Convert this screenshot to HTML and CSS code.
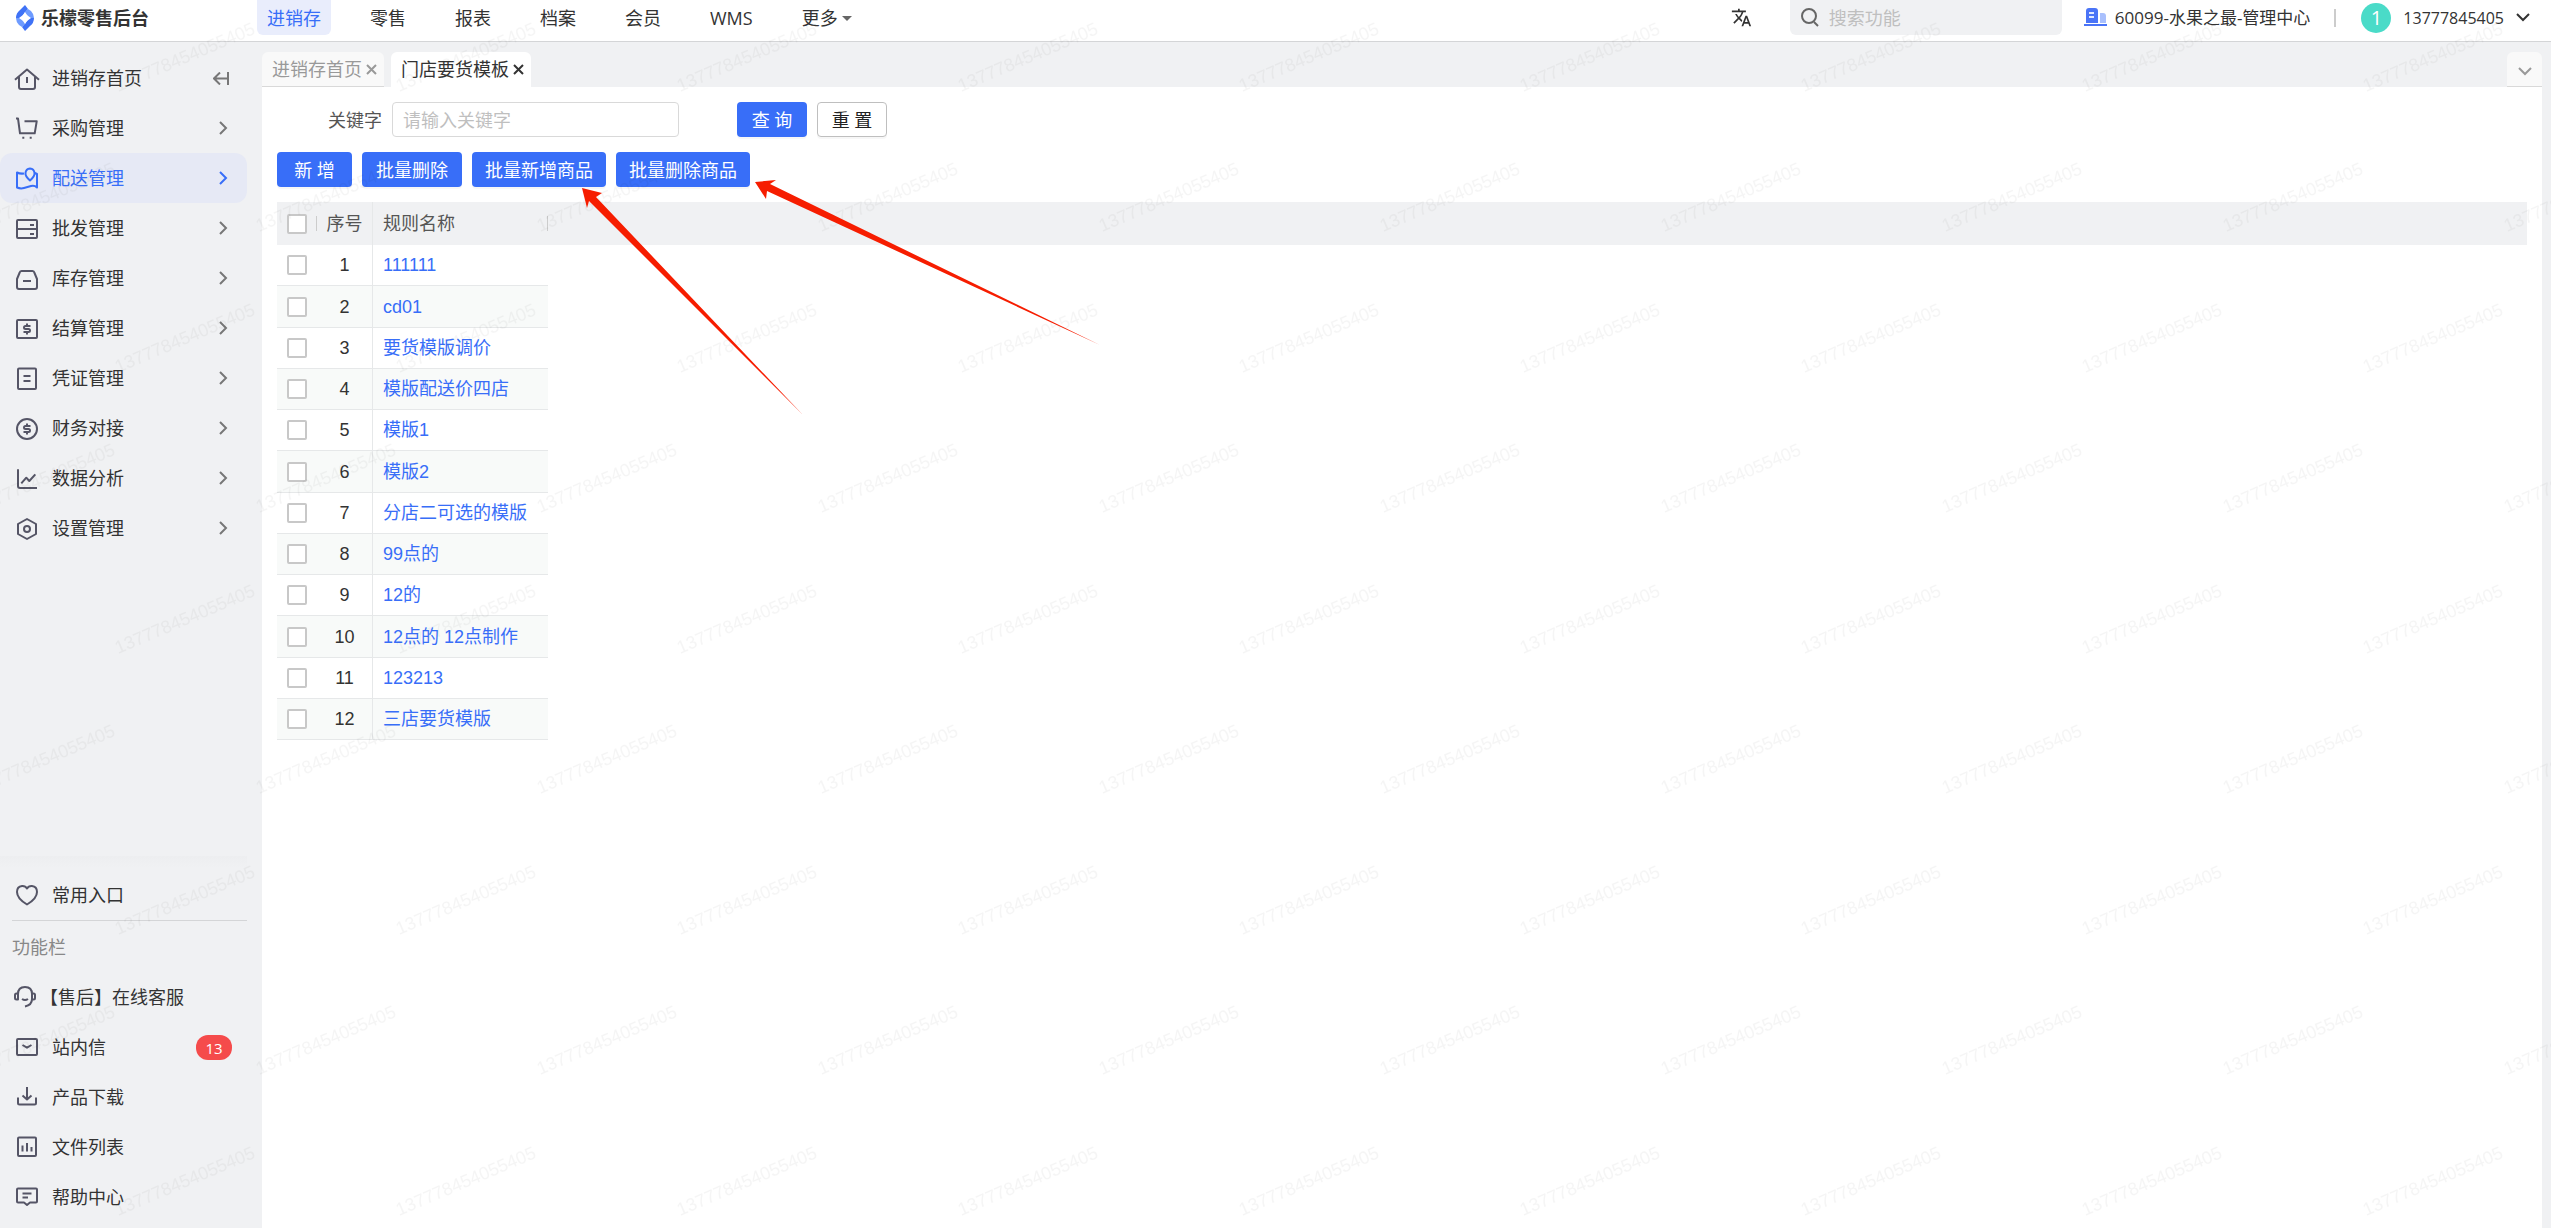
FILE: index.html
```html
<!DOCTYPE html>
<html lang="zh-CN">
<head>
    <meta charset="UTF-8">
    <title>门店要货模板</title>
    <link rel="stylesheet" href="styles.css">
</head>
<body>

<!--顶部导航-->
<header class="header">
    <a class="logo" href="#">
        <svg width="20" height="26" viewBox="0 0 20 26">
            <path d="M10 0 L13 4 L8 10 L4 13 L1 13 Q1 8 5 5z" fill="#3f72f6"/>
            <path d="M13 4 L16 6 Q19 9 19 13 L16 13 L9 8z" fill="#6e9bff"/>
            <path d="M19 13 Q19 18 15 21 L10 26 L7 22 L12 16 L16 13z" fill="#3f72f6"/>
            <path d="M1 13 L4 13 L11 18 L7 22 L4 20 Q1 17 1 13z" fill="#6e9bff"/>
            <path d="M10 7 L14 13 L10 19 L6 13z" fill="#fff"/>
        </svg>
        <span>乐檬零售后台</span>
    </a>
    <nav class="menu">
        <a class="current" href="#">进销存</a>
        <a href="#">零售</a>
        <a href="#">报表</a>
        <a href="#">档案</a>
        <a href="#">会员</a>
        <a href="#">WMS</a>
        <a href="#">更多<i class="caret"></i></a>
    </nav>
    <div class="tools">
        <button class="lang" aria-label="语言">
            <svg width="21" height="21" viewBox="0 0 24 24" fill="#333"><path d="M12.9 15.1l-2.6-2.5c1.8-1.9 3-4.2 3.8-6.5H17V4h-7V2H8v2H1v2h11.2c-.7 1.9-1.7 3.8-3.2 5.4C8 10.3 7.3 9.2 6.7 8h-2c.7 1.6 1.7 3.2 3 4.6l-5.1 5L4 19l5-5 3.1 3.1.8-2zM18.5 10h-2L12 22h2l1.1-3h4.8l1.1 3h2l-4.5-12zm-2.6 7l1.6-4.3 1.6 4.3h-3.2z"/></svg>
        </button>
        <label class="search">
            <svg width="18" height="19" viewBox="0 0 18 19" fill="none" stroke="#666" stroke-width="2"><circle cx="8" cy="8" r="7"/><path d="M13 14l4 4"/></svg>
            <input type="text" placeholder="搜索功能" aria-label="搜索功能">
        </label>
        <a class="store" href="#">
            <svg width="23" height="19" viewBox="0 0 23 19">
                <path d="M2 15V3q0-3 3-3h6q3 0 3 3v12z" fill="#4a74f7"/>
                <path d="M16 15V5h3q3 0 3 3v7z" fill="#a9c0fd"/>
                <path d="M5 5h5M5 9h5" stroke="#dfe8ff" stroke-width="2"/>
                <path d="M0 17h23" stroke="#4a74f7" stroke-width="2"/>
            </svg>
            <span>60099-水果之最-管理中心</span>
        </a>
        <i class="line"></i>
        <button class="user">
            <span class="avatar">1</span>
            <span>13777845405</span>
            <svg width="14" height="9" viewBox="0 0 14 9" fill="none" stroke="#333" stroke-width="2"><path d="M1 1l6 6 6-6"/></svg>
        </button>
    </div>
</header>

<div class="wrap">
    <!--左侧菜单-->
    <aside class="side">
        <ul class="side-list">
            <li><a href="#">
                <svg class="icon" viewBox="0 0 22 22"><path d="M-1 12.7L11 2.5l12 10.2M3 10v10q0 2 2 2h12q2 0 2-2V10M11 10v6"/></svg>
                <span>进销存首页</span>
                <svg class="fold" viewBox="0 0 16 13"><path d="M15 0v13M14 6.5H1M7 .5l-6 6 6 6"/></svg>
            </a></li>
            <li><a href="#">
                <svg class="icon" viewBox="0 0 22 22"><path d="M0 1.5h2l2 14.8h14.7l2-12H8.5M6.3 20.7h2M13.7 20.7h2"/></svg>
                <span>采购管理</span>
                <svg class="arrow" viewBox="0 0 9 14"><path d="M1 1l6 6-6 6"/></svg>
            </a></li>
            <li class="current"><a href="#">
                <svg class="icon" viewBox="0 0 22 22"><path d="M8 6.500Q4 7 1 5.500v15q3.500 1.500 7 .5t7-2 6 1.500V7l-2-1M14 13.500Q9 9 9.500 5.800 10 2 14 1.500q4 .5 4.500 4.300Q19 9 14 13.500z"/></svg>
                <span>配送管理</span>
                <svg class="arrow" viewBox="0 0 9 14"><path d="M1 1l6 6-6 6"/></svg>
            </a></li>
            <li><a href="#">
                <svg class="icon" viewBox="0 0 22 22"><rect x="1" y="3" width="20" height="18" rx="1"/><path d="M1 12h20M14 8h4M14 17h4"/></svg>
                <span>批发管理</span>
                <svg class="arrow" viewBox="0 0 9 14"><path d="M1 1l6 6-6 6"/></svg>
            </a></li>
            <li><a href="#">
                <svg class="icon" viewBox="0 0 22 22"><path d="M5.500 4h11q1.500 0 2 2l2.500 6v8q0 2-2 2H3q-2 0-2-2v-8l2.500-6q.5-2 2-2zM7 14h8"/></svg>
                <span>库存管理</span>
                <svg class="arrow" viewBox="0 0 9 14"><path d="M1 1l6 6-6 6"/></svg>
            </a></li>
            <li><a href="#">
                <svg class="icon" viewBox="0 0 22 22"><rect x="1" y="3" width="20" height="18" rx="1"/><path d="M14.500 9H9.500Q8 9 8 10.500T9.500 12h3q1.500 0 1.500 1.500T12.500 15h-5M11 6.500V9M11 15v2.500"/></svg>
                <span>结算管理</span>
                <svg class="arrow" viewBox="0 0 9 14"><path d="M1 1l6 6-6 6"/></svg>
            </a></li>
            <li><a href="#">
                <svg class="icon" viewBox="0 0 22 22"><rect x="2" y="1.500" width="18" height="20.500" rx="1"/><path d="M7.500 9h7M7.500 14h7"/></svg>
                <span>凭证管理</span>
                <svg class="arrow" viewBox="0 0 9 14"><path d="M1 1l6 6-6 6"/></svg>
            </a></li>
            <li><a href="#">
                <svg class="icon" viewBox="0 0 22 22"><circle cx="11" cy="12" r="10"/><path d="M14.500 9H9.500Q8 9 8 10.500T9.500 12h3q1.500 0 1.500 1.500T12.500 15h-5M11 6.500V9M11 15v2.500"/></svg>
                <span>财务对接</span>
                <svg class="arrow" viewBox="0 0 9 14"><path d="M1 1l6 6-6 6"/></svg>
            </a></li>
            <li><a href="#">
                <svg class="icon" viewBox="0 0 22 22"><path d="M2 2.300V19q0 2 2 2h17M5.300 16.300l5-5.600 3 3.300 6-6.700"/></svg>
                <span>数据分析</span>
                <svg class="arrow" viewBox="0 0 9 14"><path d="M1 1l6 6-6 6"/></svg>
            </a></li>
            <li><a href="#">
                <svg class="icon" viewBox="0 0 22 22"><path d="M11 2l9 5v10l-9 5-9-5V7z"/><circle cx="11" cy="12" r="3"/></svg>
                <span>设置管理</span>
                <svg class="arrow" viewBox="0 0 9 14"><path d="M1 1l6 6-6 6"/></svg>
            </a></li>
        </ul>

        <div class="side-bottom">
            <ul class="side-list">
                <li><a href="#">
                    <svg class="icon" viewBox="0 0 22 22"><path d="M11 20.500Q1 14.500 1 8q0-5.500 5-6 3.500-.2 5 2.500Q12.500 1.800 16 2q5 .5 5 6 0 6.500-10 12.500z"/></svg>
                    <span>常用入口</span>
                </a></li>
            </ul>
            <p class="side-title">功能栏</p>
            <ul class="side-list">
                <li class="service"><a href="#">
                    <svg class="icon" viewBox="0 0 22 22"><path d="M4 13.500H2.500Q1 13.500 1 12V9q0-1.500 1.500-1.500H4zM18 13.500h1.500Q21 13.500 21 12V9q0-1.500-1.500-1.500H18zM4 8q0-7 7-7t7 7v5q0 6-7 7.500M8 13q3 2 6 0"/></svg>
                    <span>【售后】在线客服</span>
                </a></li>
                <li><a href="#">
                    <svg class="icon" viewBox="0 0 22 22"><rect x="1" y="3" width="20" height="16" rx="1"/><path d="M6.500 9l4.500 2.700L15.500 9"/></svg>
                    <span>站内信</span>
                    <em class="badge">13</em>
                </a></li>
                <li><a href="#">
                    <svg class="icon" viewBox="0 0 22 22"><path d="M2 11.500V17q0 1.500 1.500 1.500h15q1.500 0 1.500-1.500v-5.500M11 1v12M6.500 9.500l4.500 4 4.500-4"/></svg>
                    <span>产品下载</span>
                </a></li>
                <li><a href="#">
                    <svg class="icon" viewBox="0 0 22 22"><rect x="2" y="1.500" width="18" height="18.500" rx="1"/><path d="M6.500 9.500v6M11 7v8.500M15.500 11v4.500"/></svg>
                    <span>文件列表</span>
                </a></li>
                <li><a href="#">
                    <svg class="icon" viewBox="0 0 22 22"><path d="M2 2.500h18q1 0 1 1v12q0 1-1 1h-6l-3 2.500-3-2.500H2q-1 0-1-1v-12q0-1 1-1zM6.500 7.500h9M6.500 11.500H12"/></svg>
                    <span>帮助中心</span>
                </a></li>
            </ul>
        </div>
    </aside>

    <!--右侧内容-->
    <main class="main">
        <div class="tabs">
            <div class="tab">
                <a href="#">进销存首页</a>
                <button class="close" aria-label="关闭"><svg width="11" height="11" viewBox="0 0 11 11"><path d="M1 1l9 9M10 1l-9 9"/></svg></button>
            </div>
            <div class="tab current">
                <a href="#">门店要货模板</a>
                <button class="close" aria-label="关闭"><svg width="11" height="11" viewBox="0 0 11 11"><path d="M1 1l9 9M10 1l-9 9"/></svg></button>
            </div>
            <button class="tab-more" aria-label="更多标签">
                <svg width="14" height="9" viewBox="0 0 14 9" fill="none" stroke="#999" stroke-width="2"><path d="M1 1l6 6 6-6"/></svg>
            </button>
        </div>

        <div class="content">
            <form class="filter">
                <label for="keyword">关键字</label>
                <input type="text" id="keyword" placeholder="请输入关键字">
                <button type="button" class="btn">查 询</button>
                <button type="button" class="btn plain">重 置</button>
            </form>
            <div class="actions">
                <button class="btn">新 增</button>
                <button class="btn">批量删除</button>
                <button class="btn">批量新增商品</button>
                <button class="btn">批量删除商品</button>
            </div>

            <table class="grid">
                <colgroup>
                    <col class="col-check">
                    <col class="col-num">
                    <col class="col-name">
                    <col>
                </colgroup>
                <thead>
                <tr>
                    <th class="check"><input type="checkbox" aria-label="全选"></th>
                    <th class="num">序号</th>
                    <th class="name">规则名称</th>
                    <th></th>
                </tr>
                </thead>
                <tbody>
                <tr><td class="check"><input type="checkbox" aria-label="选择 1"></td><td class="num">1</td><td class="name"><a href="#">111111</a></td></tr>
                <tr><td class="check"><input type="checkbox" aria-label="选择 2"></td><td class="num">2</td><td class="name"><a href="#">cd01</a></td></tr>
                <tr><td class="check"><input type="checkbox" aria-label="选择 3"></td><td class="num">3</td><td class="name"><a href="#">要货模版调价</a></td></tr>
                <tr><td class="check"><input type="checkbox" aria-label="选择 4"></td><td class="num">4</td><td class="name"><a href="#">模版配送价四店</a></td></tr>
                <tr><td class="check"><input type="checkbox" aria-label="选择 5"></td><td class="num">5</td><td class="name"><a href="#">模版1</a></td></tr>
                <tr><td class="check"><input type="checkbox" aria-label="选择 6"></td><td class="num">6</td><td class="name"><a href="#">模版2</a></td></tr>
                <tr><td class="check"><input type="checkbox" aria-label="选择 7"></td><td class="num">7</td><td class="name"><a href="#">分店二可选的模版</a></td></tr>
                <tr><td class="check"><input type="checkbox" aria-label="选择 8"></td><td class="num">8</td><td class="name"><a href="#">99点的</a></td></tr>
                <tr><td class="check"><input type="checkbox" aria-label="选择 9"></td><td class="num">9</td><td class="name"><a href="#">12的</a></td></tr>
                <tr><td class="check"><input type="checkbox" aria-label="选择 10"></td><td class="num">10</td><td class="name"><a href="#">12点的 12点制作</a></td></tr>
                <tr><td class="check"><input type="checkbox" aria-label="选择 11"></td><td class="num">11</td><td class="name"><a href="#">123213</a></td></tr>
                <tr><td class="check"><input type="checkbox" aria-label="选择 12"></td><td class="num">12</td><td class="name"><a href="#">三店要货模版</a></td></tr>
                </tbody>
            </table>
        </div>
    </main>
</div>

<!--水印-->
<svg class="watermark" aria-hidden="true">
    <defs>
        <pattern id="mark" width="281" height="281" patternUnits="userSpaceOnUse">
            <text transform="translate(118 92) rotate(-23)">137778454055405</text>
            <text transform="translate(259 232) rotate(-23)">137778454055405</text>
            <text transform="translate(-22 232) rotate(-23)">137778454055405</text>
        </pattern>
    </defs>
    <rect width="100%" height="100%" fill="url(#mark)"/>
</svg>

<!--红色箭头标注-->
<svg class="notes" width="1110" height="430" viewBox="0 0 1110 430" aria-hidden="true">
    <path d="M582 188l20 5-6 4L803 415 589 201l-2 7z"/>
    <path d="M755 182l21-2-6 4L1100 345 767 191l-1 8z"/>
</svg>

</body>
</html>
```

FILE: styles.css
```css
*{
    padding: 0;
    margin: 0;
    box-sizing: border-box;
}
body{
    min-height: 100vh;
    display: flex;
    flex-direction: column;
    background-color: #f0f1f3;
    color: #333;
    font: 400 18px/26px "Open Sans","Noto Sans CJK SC",sans-serif;
}
ul{
    list-style: none;
}
a{
    color: inherit;
    text-decoration: none;
}
button,input{
    font: inherit;
    color: inherit;
    border: none;
    background: none;
}
button{
    cursor: pointer;
}
svg{
    flex: none;
}

/*顶部*/
.header{
    display: flex;
    height: 42px;
    background-color: #fff;
    border-bottom: 1px solid #d4d5d7;
    white-space: nowrap;
}
.logo{
    width: 257px;
    height: 36px;
    padding-left: 15px;
    display: flex;
    align-items: center;
    gap: 6px;
    font-weight: 700;
}
.menu{
    display: flex;
    gap: 29px;
    height: 35px;
    line-height: 36px;
}
.menu a{
    padding: 0 10px;
    border-radius: 0 0 6px 6px;
}
.menu .current{
    background-color: #e9edfc;
    color: #386ef8;
}
.caret{
    display: inline-block;
    margin-left: 4px;
    vertical-align: 4px;
    border: 5px solid transparent;
    border-top-color: #666;
    border-bottom: none;
}
.tools{
    display: flex;
    align-items: center;
    height: 35px;
    margin-left: auto;
    padding-right: 21px;
}
.lang{
    display: flex;
    margin-right: 38px;
}
.search{
    display: flex;
    align-items: center;
    gap: 10px;
    width: 272px;
    height: 35px;
    padding: 0 11px;
    margin-right: 22px;
    border-radius: 0 0 6px 6px;
    background-color: #f0f1f3;
}
.search input{
    flex: 1;
    min-width: 0;
    outline: none;
}
::placeholder{
    color: #bfbfbf;
    opacity: 1;
}
.store{
    display: flex;
    align-items: center;
    gap: 8px;
    font-size: 17px;
}
.line{
    width: 2px;
    height: 18px;
    margin: 0 25px 0 24px;
    background-color: #ccc;
}
.user{
    display: flex;
    align-items: center;
    gap: 12px;
    font-size: 16px;
}
.avatar{
    width: 30px;
    height: 30px;
    border-radius: 50%;
    background-color: #4adbc8;
    color: #fff;
    font-size: 20px;
    line-height: 30px;
    text-align: center;
}

.wrap{
    flex: 1;
    display: flex;
}

/*左侧*/
.side{
    width: 262px;
    padding-top: 11px;
    padding-right: 15px;
    display: flex;
    flex-direction: column;
    flex: none;
}
.side-list a{
    display: flex;
    align-items: center;
    height: 50px;
    padding: 0 15px 0 16px;
    border-radius: 12px;
}
.side-list .current a{
    background-color: #e6e9f5;
    color: #386ef8;
}
.icon{
    width: 22px;
    height: 22px;
    margin-right: 14px;
    overflow: visible;
    fill: none;
    stroke: #555566;
    stroke-width: 2;
    stroke-linejoin: round;
}
.arrow,.fold{
    width: 9px;
    height: 14px;
    margin-left: auto;
    margin-right: 4px;
    fill: none;
    stroke: #777;
    stroke-width: 2;
}
.fold{
    width: 16px;
    height: 13px;
    margin-right: 3px;
}
.current .icon,.current .arrow{
    stroke: #386ef8;
}
.side-bottom{
    margin-top: auto;
    padding: 14px 0 6px;
    background: linear-gradient(#edeef0,#f0f1f3 12px);
}
.side-title{
    height: 52px;
    margin-left: 12px;
    border-top: 1px solid #d4d5d7;
    color: #888;
    line-height: 53px;
}
.service a{
    padding-left: 14px;
}
.service .icon{
    margin-right: 4px;
}
.badge{
    width: 36px;
    height: 25px;
    margin-left: auto;
    border-radius: 12px;
    background-color: #f54b4b;
    color: #fff;
    font-size: 15px;
    font-style: normal;
    line-height: 26px;
    text-align: center;
}

/*右侧*/
.main{
    flex: 1;
    min-width: 0;
    margin-right: 9px;
    display: flex;
    flex-direction: column;
}
.tabs{
    display: flex;
    gap: 7px;
    padding-top: 10px;
}
.tab{
    display: flex;
    align-items: center;
    gap: 4px;
    height: 35px;
    padding: 0 7px 0 10px;
    border-radius: 6px 6px 0 0;
    border-bottom: 1px solid #d9d9d9;
    background-color: #f9f9f9;
    color: #999;
}
.tab.current{
    border-color: #fff;
    background-color: #fff;
    color: #333;
}
.close{
    display: flex;
    stroke: #999;
    stroke-width: 2;
}
.current .close{
    stroke: #333;
}
.tab-more{
    width: 35px;
    height: 35px;
    margin-left: auto;
    border-radius: 6px 6px 0 0;
    border-bottom: 1px solid #d9d9d9;
    background-color: #f9f9f9;
    line-height: 26px;
}
.content{
    flex: 1;
    padding: 15px;
    background-color: #fff;
}
.filter,.actions{
    display: flex;
    gap: 10px;
    height: 35px;
    margin-bottom: 15px;
}
.filter label{
    width: 105px;
    color: #555;
    line-height: 36px;
    text-align: right;
}
.filter input{
    width: 287px;
    height: 35px;
    margin-right: 48px;
    padding: 0 10px;
    border: 1px solid #d9d9d9;
    border-radius: 4px;
}
.btn{
    min-width: 100px;
    height: 35px;
    padding: 0 13px;
    border-radius: 4px;
    background-color: #386ef8;
    box-shadow: 0 2px 0 rgba(0,0,0,.03);
    color: #fff;
}
.actions .btn:first-child{
    min-width: 75px;
}
.filter .btn{
    min-width: 70px;
}
.filter .plain{
    border: 1px solid #bfbfbf;
    background-color: #fff;
    color: #222;
}

.grid{
    width: 100%;
    table-layout: fixed;
    border-spacing: 0;
    font-family: "Liberation Sans","Noto Sans CJK SC",sans-serif;
    line-height: 24px;
}
.col-check{
    width: 40px;
}
.col-num{
    width: 56px;
}
.col-name{
    width: 175px;
}
.grid th{
    height: 43px;
    background-color: #f0f1f3;
    color: #555;
    font-weight: 400;
}
.grid td{
    height: 41px;
    border-bottom: 1px solid #e6e8e9;
}
.grid tr:nth-child(4n+2) td{
    height: 42px;
}
.grid tr:nth-child(2n) td{
    background-color: #f8faf9;
}
.grid .num{
    border-right: 1px solid #e6e8e9;
    text-align: center;
}
.grid .name{
    padding-left: 10px;
    text-align: left;
}
.grid td.name{
    color: #386ef8;
}
/*表头分隔线*/
.grid th.check,.grid th.name{
    background-image: linear-gradient(#ccc,#ccc);
    background-position: right center;
    background-size: 1px 15px;
    background-repeat: no-repeat;
}
.check input{
    display: block;
    width: 20px;
    height: 20px;
    margin: 0 auto;
    appearance: none;
    border: 2px solid #c8c8c8;
    border-radius: 2px;
    background-color: #fff;
}
.check input:checked{
    background-color: #386ef8;
}

.watermark,.notes{
    position: absolute;
    left: 0;
    top: 0;
    pointer-events: none;
}
.watermark{
    width: 100%;
    height: 100%;
}
.watermark text{
    font: 18px "Liberation Sans",sans-serif;
    fill: rgba(0,0,0,.04);
}
.notes{
    fill: #f61d00;
}
```
